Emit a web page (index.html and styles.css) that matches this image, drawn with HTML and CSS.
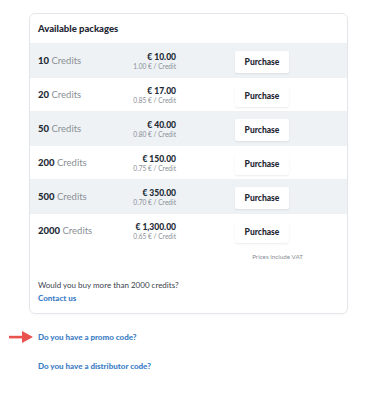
FILE: index.html
```html
<!DOCTYPE html>
<html>
<head>
<meta charset="utf-8">
<link rel="stylesheet" href="styles.css">
</head>
<body>
<div class="page">
  <div class="card">
    <div class="card-head">Available packages</div>
    <div class="row alt">
      <div class="credits"><b>10</b> Credits</div>
      <div class="price"><div class="total">€ 10.00</div><div class="unit">1.00 € / Credit</div></div>
      <div class="action"><button class="buy">Purchase</button></div>
    </div>
    <div class="row">
      <div class="credits"><b>20</b> Credits</div>
      <div class="price"><div class="total">€ 17.00</div><div class="unit">0.85 € / Credit</div></div>
      <div class="action"><button class="buy">Purchase</button></div>
    </div>
    <div class="row alt">
      <div class="credits"><b>50</b> Credits</div>
      <div class="price"><div class="total">€ 40.00</div><div class="unit">0.80 € / Credit</div></div>
      <div class="action"><button class="buy">Purchase</button></div>
    </div>
    <div class="row">
      <div class="credits"><b>200</b> Credits</div>
      <div class="price"><div class="total">€ 150.00</div><div class="unit">0.75 € / Credit</div></div>
      <div class="action"><button class="buy">Purchase</button></div>
    </div>
    <div class="row alt">
      <div class="credits"><b>500</b> Credits</div>
      <div class="price"><div class="total">€ 350.00</div><div class="unit">0.70 € / Credit</div></div>
      <div class="action"><button class="buy">Purchase</button></div>
    </div>
    <div class="row">
      <div class="credits"><b>2000</b> Credits</div>
      <div class="price"><div class="total">€ 1,300.00</div><div class="unit">0.65 € / Credit</div></div>
      <div class="action"><button class="buy">Purchase</button></div>
    </div>
    <div class="vat">Prices include VAT</div>
    <div class="more">
      <div class="q">Would you buy more than 2000 credits?</div>
      <a class="link block" href="#">Contact us</a>
    </div>
  </div>
  <div class="codes">
    <div class="code-line">
      <svg class="arrow" width="24" height="12" viewBox="0 0 24 12"><rect x="0" y="4.8" width="14" height="2.6" fill="#e8534d"/><polygon points="13,0 24,6 13,12" fill="#e8534d"/></svg>
      <a class="link" href="#">Do you have a promo code?</a>
    </div>
    <div class="code-line">
      <a class="link" href="#">Do you have a distributor code?</a>
    </div>
  </div>
</div>
</body>
</html>
```
FILE: styles.css
```css
* { box-sizing: border-box; }
body {
  margin: 0;
  background: #fff;
  font-family: Lato, "Noto Sans", sans-serif;
  color: #222a36;
}
.page {
  padding: 13px 27px 0 29px;
}
.card {
  width: 319px;
  height: 301px;
  border: 1px solid #e3e7eb;
  border-radius: 6px;
  overflow: hidden;
  box-shadow: 0 1px 2px rgba(0,0,0,0.03);
}
.card-head {
  height: 29px;
  padding-left: 8px;
  display: flex;
  align-items: center;
  font-weight: 900;
  font-size: 9.5px;
  color: #1e2633;
}
.row {
  height: 34px;
  display: grid;
  grid-template-columns: 78px 60px 1fr;
  align-items: center;
  padding-left: 8px;
  background: #fff;
  border-top: 1px solid #eef1f4;
}
.row.alt { background: #eef2f5; }
.row:last-of-type { border-bottom: 1px solid #eef1f4; }
.credits {
  font-size: 9.5px;
  color: #8a8f96;
}
.credits b { color: #232b37; font-weight: 900; }
.price {
  text-align: right;
}
.total {
  font-size: 8.5px;
  font-weight: 900;
  color: #222a36;
  line-height: 10px;
}
.unit {
  font-size: 6.6px;
  color: #8a8f96;
  line-height: 8px;
}
.action {
  padding-left: 59px;
}
.buy {
  width: 54px;
  height: 22px;
  border: none;
  background: #fff;
  border-radius: 2px;
  box-shadow: 0 1px 2px rgba(0,0,0,0.08);
  font-family: Lato, "Noto Sans", sans-serif;
  font-weight: 900;
  font-size: 8.5px;
  color: #1f2733;
  padding: 0;
}
.vat {
  text-align: right;
  padding-right: 44px;
  margin-top: 6px;
  font-size: 6.3px;
  color: #8a8f96;
}
.more {
  padding: 19px 0 0 8px;
}
.q {
  font-size: 8px;
  color: #3a414b;
  line-height: 12px;
}
.link {
  font-size: 8px;
  font-weight: 900;
  color: #3b7dc6;
  text-decoration: none;
  line-height: 12px;
}
.link.block {
  display: block;
  margin-top: 1px;
}
.codes {
  padding-top: 16px;
}
.code-line {
  display: flex;
  align-items: center;
  height: 14px;
  margin-left: 9px;
  margin-bottom: 15px;
}
.code-line .arrow {
  margin-left: -29px;
  margin-right: 5px;
}
```
